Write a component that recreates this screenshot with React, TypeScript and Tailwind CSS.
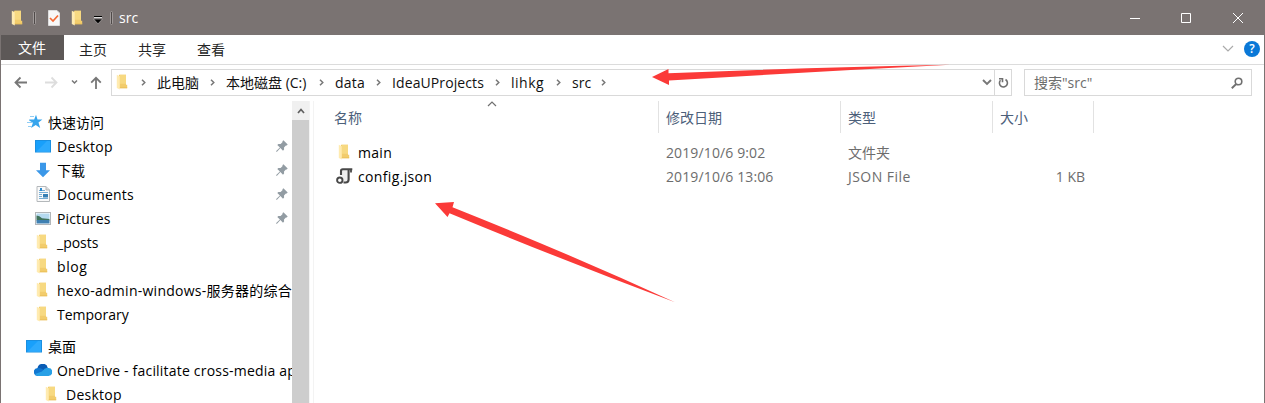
import React from "react";

function Folder({ className = "" }: { className?: string }) {
  return (
    <svg width="12" height="16" viewBox="0 0 12 16" className={`shrink-0 ${className}`}>
      <path d="M3 .8h7v10h1.200v3.400H3z" fill="#f2cc6c" />
      <path d="M4 .8h6v9H4z" fill="#f7d981" />
      <path d="M.8.800l3 1.500v13.200L.8 14z" fill="#ffebb0" />
      <path d="M3.800 13.400h7.400v.8H3.800z" fill="#e9be58" />
    </svg>
  );
}

function Monitor() {
  return (
    <svg width="16" height="13" viewBox="0 0 16 13" className="shrink-0">
      <rect x="0.5" y="0.5" width="15" height="11.5" fill="#18a0fb" stroke="#1b8fe0" />
      <path d="M1 12L12 1h3v11z" fill="#3cb1ff" opacity=".6" />
    </svg>
  );
}

function Pin() {
  return (
    <svg width="12" height="12" viewBox="0 0 12 12" className="shrink-0">
      <path d="M7.400.3l4.300 4.300-1 1-.8-.2-1.900 2 .1 2.200-1.100 1.100-2.600-2.600L1 11.700H.2V11L3.900 7.600 1.300 5l1.100-1.100 2.200.1 2-1.900-.2-.8z" fill="#929ca3" />
    </svg>
  );
}

function Crumb({ className }: { className: string }) {
  return (
    <svg width="5" height="7" viewBox="0 0 5 7" className={`shrink-0 ${className}`}>
      <path d="M1 .7L3.800 3.500 1 6.300" fill="none" stroke="#777" strokeWidth="1.500" />
    </svg>
  );
}

function NavItem({ icon, label, indent, pinned = false, track = "" }: { icon: React.ReactNode; label: string; indent: string; pinned?: boolean; track?: string }) {
  return (
    <div className={`flex h-6 items-center overflow-hidden ${indent}`}>
      <span className="mb-[2px] flex w-[18px] shrink-0 items-center justify-center">{icon}</span>
      <span className={`ml-[5px] whitespace-nowrap ${track}`}>{label}</span>
      {pinned && <span className="mb-[2px] ml-auto mr-[4px]"><Pin /></span>}
    </div>
  );
}

const star = (
  <svg width="16" height="16" viewBox="0 0 16 16" className="ml-[2px] shrink-0">
    <path d="M9 .8l1.500 4.600h4.900l-3.900 3.100 1.700 5.500-4.500-3.100-4.600 3.200 1.800-5.300L2.200 6.600V5.400h5z" fill="#36a5ed" />
    <path d="M3 2.500h4M0 8.500h5M1 12.500h4" stroke="#8fcdf5" />
  </svg>
);
const down = (
  <svg width="16" height="16" viewBox="0 0 16 16" className="shrink-0">
    <path d="M5 .8h6v7.400h4l-7 7-7-7h4z" fill="#3a97e8" />
  </svg>
);
const doc = (
  <svg width="14" height="16" viewBox="0 0 14 16" className="-ml-px shrink-0">
    <path d="M1 .5h9l3.500 3.500v11.500H1z" fill="#fafafa" stroke="#b4b8bb" />
    <path d="M10 .5V4h3.500" fill="#ddd" stroke="#b4b8bb" />
    <path d="M3 4.500h6M3 6.500h9M3 8.500h3M3 10.500h3M3 12.500h9" stroke="#75aed6" />
    <path d="M7 8h5v3.500H7z" fill="#357fb5" />
    <path d="M4 2h2v3H4z" fill="#2d8bd0" />
  </svg>
);
const pic = (
  <svg width="16" height="13" viewBox="0 0 16 13" className="shrink-0">
    <rect x=".5" y=".5" width="15" height="12" fill="#fff" stroke="#b2b6b9" />
    <path d="M1.500 1.500h13V7h-13z" fill="#b5daf0" />
    <path d="M1.500 3.500q3 .2 5.500 2.800l7.500.7v1.500h-13z" fill="#40735b" />
    <path d="M1.500 8h13v3.500h-13z" fill="#3f80b2" />
  </svg>
);
const cloud = (
  <svg width="18" height="12" viewBox="0 0 18 12" className="shrink-0">
    <path d="M3.500 5A5.200 5.200 0 0 1 13.800 4L12 9H3z" fill="#0a5cb5" />
    <path d="M4 12A4 4 0 0 1 3.700 4q2.600-.3 4.800 1.200L13 8l-2 4z" fill="#1177d1" />
    <path d="M8 7.500q3-4.300 6-3.500a4 4 0 0 1 .5 8H4Q2 11.500 1 10z" fill="#28a0e6" />
  </svg>
);

export default function App() {
  return (
    <div className="relative flex h-[403px] w-[1265px] flex-col overflow-hidden border-x border-[#7a7372] bg-white font-['Open_Sans','Noto_Sans_CJK_SC',sans-serif] text-[14px] leading-6 text-black">
      <header className="flex h-[35px] shrink-0 items-center bg-[#7a7372] text-white">
        <Folder className="ml-[10px]" />
        <span className="ml-[10px] h-[14px] w-[3px] rounded-sm border border-[#a09a99] bg-[#4f4a49]" />
        <svg width="12" height="16" viewBox="0 0 12 16" className="ml-[12px]">
          <path d="M.5.5H9L11.500 3v12.500H.5z" fill="#f8f8f8" stroke="#ddd" />
          <path d="M2 8l3 3 5-5.500" fill="none" stroke="#f26a35" strokeWidth="1.700" />
        </svg>
        <Folder className="ml-[11px]" />
        <svg width="10" height="10" viewBox="0 0 10 10" className="ml-[10px] mt-[4px]">
          <path d="M1 1.500h8" stroke="#000" strokeWidth="1" />
          <path d="M1 2.500h8" stroke="#ddd" />
          <path d="M.5 4h9L5 8.800z" fill="#000" stroke="#c4c0bf" strokeWidth=".6" />
        </svg>
        <span className="ml-[7px] h-[14px] w-[3px] rounded-sm border border-[#a09a99] bg-[#4f4a49]" />
        <span className="ml-[6px]">src</span>
        <svg width="115" height="12" viewBox="0 0 115 12" className="ml-auto mr-[20px]" fill="none" stroke="#fff">
          <path d="M1 6.500h10M104 1l10 10M114 1L104 11" />
          <path d="M52.500 1.500h9v9h-9z" />
        </svg>
      </header>

      <nav className="flex h-[30px] shrink-0 items-start border-b border-[#dcdcdc] text-[#262626]">
        <span className="h-[25px] w-[63px] bg-[#5d5857] pl-[17px] leading-[26px] text-white">文件</span>
        <span className="ml-[15px] leading-[30px]">主页</span>
        <span className="ml-[31px] leading-[30px]">共享</span>
        <span className="ml-[31px] leading-[30px]">查看</span>
        <div className="ml-auto mr-[4px] flex h-[28px] items-center">
          <svg width="12" height="8" viewBox="0 0 12 8" className="mr-[10px]">
            <path d="M1 1l5 5 5-5" fill="none" stroke="#aaa" strokeWidth="1.200" />
          </svg>
          <span className="flex h-4 w-4 items-center justify-center rounded-full bg-[#0a78d7] text-[12px] font-semibold leading-4 text-white">?</span>
        </div>
      </nav>

      <section className="flex h-[36px] shrink-0 items-start pt-[4px]">
        <svg width="102" height="27" viewBox="0 0 102 27" className="mr-[8px] shrink-0" fill="none" stroke="#777" strokeWidth="1.800">
          <path d="M26 13.500H15M19.500 8.500l-5 5 5 5" />
          <path d="M44 13.500h11M50.500 8.500l5 5-5 5" stroke="#ddd" />
          <path d="M71 11.500l2.500 2.500 2.500-2.500" strokeWidth="1.500" />
          <path d="M95 20V9M90.200 13.700L95 8.800l4.800 4.900" />
        </svg>
        <div className="flex h-[27px] w-[901px] shrink-0 items-center border border-[#d9d9d9] text-[#111]">
          <Folder className="mb-px ml-[4px]" />
          <Crumb className="ml-[13px]" />
          <span className="ml-[11px] w-[43px] shrink-0 whitespace-nowrap">此电脑</span>
          <Crumb className="ml-[10px]" />
          <span className="ml-[11px] w-[83px] shrink-0 whitespace-nowrap">本地磁盘 (C:)</span>
          <Crumb className="ml-[10px]" />
          <span className="ml-[11px] w-[29px] shrink-0 whitespace-nowrap tracking-[0.2px]">data</span>
          <Crumb className="ml-[12px]" />
          <span className="ml-[11px] w-[92px] shrink-0 whitespace-nowrap tracking-[0.1px]">IdeaUProjects</span>
          <Crumb className="ml-[11px]" />
          <span className="ml-[11px] w-[34px] shrink-0 whitespace-nowrap tracking-[0.5px]">lihkg</span>
          <Crumb className="ml-[11px]" />
          <span className="ml-[11px] w-[18px] shrink-0 whitespace-nowrap">src</span>
          <Crumb className="ml-[11px]" />
          <div className="ml-auto flex h-full items-center">
            <svg width="10" height="7" viewBox="0 0 10 7" className="mr-[2px]">
              <path d="M1 1l4 4 4-4" fill="none" stroke="#777" strokeWidth="1.900" />
            </svg>
            <span className="flex h-full w-[17px] items-center justify-center border-l border-[#d9d9d9]">
              <svg width="11" height="12" viewBox="0 0 11 12" fill="none" stroke="#707070" strokeWidth="1.600">
                <path d="M7.500 2.500A4 4 0 1 1 2.500 3.200M1 1.700h3.500v3.600" />
              </svg>
            </span>
          </div>
        </div>
        <div className="ml-[12px] flex h-[27px] w-[228px] shrink-0 items-center border border-[#d9d9d9] pl-[9px] pr-[8px] text-[#6d6d6d]">
          <span>搜索"src"</span>
          <svg width="12" height="12" viewBox="0 0 12 12" className="ml-auto" fill="none" stroke="#707070">
            <circle cx="7.500" cy="4.500" r="3.300" strokeWidth="1.600" />
            <path d="M5.200 7L.8 11.300" strokeWidth="1.900" />
          </svg>
        </div>
      </section>

      <main className="flex min-h-0 flex-1">
        <aside className="w-[291px] shrink-0 overflow-hidden pt-[10px]">
          <NavItem icon={star} label="快速访问" indent="pl-[24px]" />
          <NavItem icon={<Monitor />} label="Desktop" indent="pl-[33px]" pinned track="tracking-[0.25px]" />
          <NavItem icon={down} label="下载" indent="pl-[33px]" pinned />
          <NavItem icon={doc} label="Documents" indent="pl-[33px]" pinned track="tracking-[0.22px]" />
          <NavItem icon={pic} label="Pictures" indent="pl-[33px]" pinned track="tracking-[0.12px]" />
          <NavItem icon={<Folder className="-ml-[3px]" />} label="_posts" indent="pl-[33px]" />
          <NavItem icon={<Folder className="-ml-[3px]" />} label="blog" indent="pl-[33px]" track="tracking-[0.6px]" />
          <NavItem icon={<Folder className="-ml-[3px]" />} label="hexo-admin-windows-服务器的综合" indent="pl-[33px]" track="tracking-[0.26px]" />
          <NavItem icon={<Folder className="-ml-[3px]" />} label="Temporary" indent="pl-[33px]" />
          <div className="h-2" />
          <NavItem icon={<Monitor />} label="桌面" indent="pl-[24px]" />
          <NavItem icon={cloud} label="OneDrive - facilitate cross-media ap" indent="pl-[33px]" track="tracking-[0.2px]" />
          <NavItem icon={<Folder className="-ml-[3px]" />} label="Desktop" indent="pl-[42px]" track="tracking-[0.25px]" />
        </aside>
        <div className="flex w-[18px] shrink-0 flex-col border-r border-[#f3f3f3]">
          <span className="flex h-[19px] items-center justify-center bg-[#f0f0f0]">
            <svg width="8" height="6" viewBox="0 0 8 6"><path d="M1 5l3-3.500L7 5" fill="none" stroke="#606060" strokeWidth="1.700" /></svg>
          </span>
          <span className="flex-1 bg-[#cdcdcd]" />
        </div>
        <div className="ml-[3px] flex-1 border-l border-[#f3f3f3]">
          <div className="flex h-8 items-center text-[#4c607a]">
            <span className="flex h-full w-[345px] shrink-0 border-r border-[#e2e2e2] pl-[20px] leading-[34px]">
              名称
              <svg width="10" height="6" viewBox="0 0 10 6" className="ml-[125px]"><path d="M1 5l4-4 4 4" fill="none" stroke="#707070" strokeWidth="1.200" /></svg>
            </span>
            <span className="h-full w-[182px] shrink-0 border-r border-[#e2e2e2] pl-[7px] leading-[34px]">修改日期</span>
            <span className="h-full w-[152px] shrink-0 border-r border-[#e2e2e2] pl-[7px] leading-[34px]">类型</span>
            <span className="h-full w-[101px] shrink-0 border-r border-[#e2e2e2] pl-[7px] leading-[34px]">大小</span>
          </div>
          <div className="mt-[8px] flex h-6 items-center text-[#6d6d6d]">
            <Folder className="mb-[2px] ml-[24px]" />
            <span className="ml-[8px] w-[308px] tracking-[0.3px] text-black">main</span>
            <span className="w-[182px] tracking-[0.12px]">2019/10/6 9:02</span>
            <span className="w-[152px]">文件夹</span>
          </div>
          <div className="flex h-6 items-center text-[#6d6d6d]">
            <svg width="17" height="16" viewBox="0 0 17 16" className="mb-[2px] ml-[22px] shrink-0" fill="none" stroke="#484848">
              <path d="M5.500 1.500h7v10q0 3-3 3H6z" fill="#efefef" stroke="none" />
              <path d="M5 7V3Q5 1.200 6.800 1.200H16.300M12.600 1.500V11.500Q12.600 14.500 9.600 14.500H7.500" strokeWidth="2.100" />
              <path d="M15 1.500V4.500" strokeWidth="1.800" />
              <circle cx="3.800" cy="12.200" r="2.700" fill="#fff" strokeWidth="1.900" />
            </svg>
            <span className="ml-[5px] w-[308px] tracking-[0.35px] text-black">config.json</span>
            <span className="w-[182px] tracking-[0.12px]">2019/10/6 13:06</span>
            <span className="w-[152px] tracking-[0.45px]">JSON File</span>
            <span className="w-[85px] text-right">1 KB</span>
          </div>
        </div>
      </main>

      <svg width="1265" height="403" viewBox="0 0 1265 403" className="pointer-events-none absolute -left-px top-0" fill="#fb3a38">
        <path d="M652 77L668.500 69v4.200Q800 68 950 64.800 810 72 669 80.500V85z" />
        <path d="M435 203.300L454 202l-1.500 5.200Q570 254 675 302.300 560 259 449.500 213.200L447.500 217z" />
      </svg>
    </div>
  );
}
